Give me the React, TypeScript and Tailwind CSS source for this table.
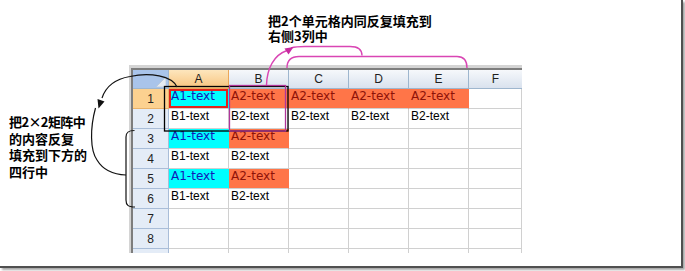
type Fill = 'cyan' | 'orange' | undefined
type CellData = { text?: string; fill?: Fill; focus?: boolean }

const cy = (text: string, focus = false): CellData => ({ text, fill: 'cyan', focus })
const or = (text: string): CellData => ({ text, fill: 'orange' })
const tx = (text: string): CellData => ({ text })

const COLS = ['A', 'B', 'C', 'D', 'E', 'F']

// 9 rows, the last one is cut off by the window
const ROWS: CellData[][] = [
  [cy('A1-text', true), or('A2-text'), or('A2-text'), or('A2-text'), or('A2-text'), {}],
  [tx('B1-text'), tx('B2-text'), tx('B2-text'), tx('B2-text'), tx('B2-text'), {}],
  [cy('A1-text'), or('A2-text'), {}, {}, {}, {}],
  [tx('B1-text'), tx('B2-text'), {}, {}, {}, {}],
  [cy('A1-text'), or('A2-text'), {}, {}, {}, {}],
  [tx('B1-text'), tx('B2-text'), {}, {}, {}, {}],
  [{}, {}, {}, {}, {}, {}],
  [{}, {}, {}, {}, {}, {}],
  [{}, {}, {}, {}, {}, {}],
]

function Cell({ cell }: { cell: CellData }) {
  let cls = 'bg-white border-r-[#d0d0d0] text-black font-["Liberation_Sans",Arial,sans-serif]'
  if (cell.fill === 'cyan') cls = 'bg-[#00ffff] border-r-[#00ffff] text-[#1418b8] font-["DejaVu_Sans",sans-serif]'
  if (cell.fill === 'orange') cls = 'bg-[#ff7548] border-r-[#ff7548] text-[#8e1208] font-["DejaVu_Sans",sans-serif]'
  return (
    <div
      className={`h-[20px] border-r border-b border-b-[#d0d0d0] pl-[2px] text-[12px] leading-[14px] whitespace-nowrap overflow-hidden ${cls} ${
        cell.focus ? 'shadow-[inset_0_0_0_2px_#e3231c]' : ''
      }`}
    >
      {cell.text}
    </div>
  )
}

function Sheet() {
  return (
    <div className="h-[188px] w-[393px] overflow-hidden border-l-2 border-t-[3px] border-[#d4d4d4]">
      <div className="h-full border-l-2 border-t-2 border-[#7d7d7d]">
        <div className="grid grid-cols-[36px_repeat(5,60px)_53px] font-['Liberation_Sans',Arial,sans-serif] text-[12px] text-[#1e1e1e]">
          {/* corner */}
          <div className="relative h-[19px] border-r border-b border-[#9eb6ce] bg-[#a9c4ea]">
            <svg className="absolute right-[2px] bottom-[1px]" width="10" height="10" viewBox="0 0 10 10">
              <polygon points="10,0 10,10 0,10" fill="#e4eaf2" stroke="#b9c6d6" strokeWidth="0.8" />
            </svg>
          </div>
          {COLS.map((c, i) => (
            <div
              key={c}
              className={`flex h-[19px] items-center justify-center border-b ${i < 5 ? 'border-r' : ''} ${
                i === 0
                  ? 'bg-gradient-to-b from-[#fde6bd] to-[#f7c47e] border-[#eba759]'
                  : 'bg-gradient-to-b from-[#f6f8fb] to-[#d9e2ee] border-[#9eb6ce]'
              }`}
            >
              {c}
            </div>
          ))}
          {ROWS.map((row, r) => (
            <>
              <div
                key={`h${r}`}
                className={`flex h-[20px] items-center justify-center border-r border-b ${
                  r === 0 ? 'bg-[#fcd190] border-[#e9b26a]' : 'bg-[#e4ecf7] border-[#a9bdd8]'
                }`}
              >
                {r < 8 ? r + 1 : ''}
              </div>
              {row.map((cell, c) => (
                <Cell key={`${r}-${c}`} cell={cell} />
              ))}
            </>
          ))}
        </div>
      </div>
    </div>
  )
}

function Marks() {
  return (
    <svg className="pointer-events-none absolute left-0 top-0" width="685" height="271" viewBox="0 0 685 271" fill="none">
      {/* selection boxes */}
      <rect x="164.5" y="86.5" width="123.5" height="44.5" stroke="#000" strokeWidth="1.3" />
      <rect x="229.5" y="85.5" width="56" height="45.5" stroke="#b0359a" strokeWidth="1.3" />

      {/* magenta: copy to the right */}
      <g stroke="#d946b4" strokeWidth="1.4">
        <path d="M266.5 85 C267 68, 274 55, 287 50.5" />
        <path d="M291 48 C296 46.5, 300 46.5, 305 46.5 L350 46.5 C358 46.5, 362 50, 362 55.5" />
        <path d="M287 68 C287 60, 291 56.5, 299 56.5 L457 56.5 C463 56.5, 467 60, 467 68" />
      </g>
      <polygon points="293.5,47 288.5,54.5 284.5,48.5" fill="#c82aa0" />

      {/* black: copy downwards */}
      <g stroke="#111" strokeWidth="1.2">
        <path d="M177 87 C172 76, 150 72, 130 76.5 C115 79, 106 86, 102 98" />
        <path d="M95.5 108 C90 128, 90 150, 97 160 C103 170, 112 174.5, 126 175" />
        <path d="M134.5 130.5 C128 130.5, 126 132.5, 126 137 L126 200 C126 205, 128 207, 135 207" />
      </g>
      <polygon points="98.5,108.5 104.5,101.5 97.5,99" fill="#111" />
    </svg>
  )
}

export default function App() {
  return (
    <div className="relative h-[271px] w-[685px] overflow-hidden bg-white">
      <div className="h-[268px] w-[683px] border-r-2 border-b-2 border-[#505050] bg-white shadow-[2px_2px_2px_rgba(0,0,0,0.35)]">
        <div className="pl-[268px] pt-[13px] font-['Noto_Sans_CJK_SC',sans-serif] text-[13px] font-bold leading-[15px] text-black">
          <div className="whitespace-nowrap">把2个单元格内同反复填充到</div>
          <div className="whitespace-nowrap">右侧3列中</div>
        </div>
        <div className="mt-[22px] flex">
          <div className="w-[129px] pl-[9px] pt-[49px] font-['Noto_Sans_CJK_SC',sans-serif] text-[13px] font-bold leading-[16.5px] text-black">
            <div className="whitespace-nowrap tracking-[-0.6px]">把2×2矩阵中</div>
            <div className="whitespace-nowrap">的内容反复</div>
            <div className="whitespace-nowrap">填充到下方的</div>
            <div className="whitespace-nowrap">四行中</div>
          </div>
          <Sheet />
        </div>
      </div>
      <Marks />
    </div>
  )
}
